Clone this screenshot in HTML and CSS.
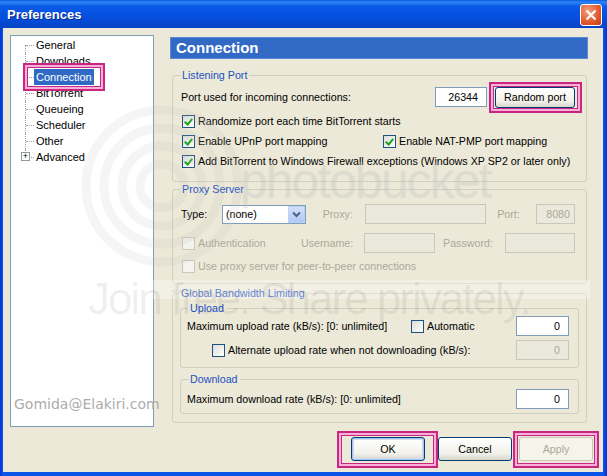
FILE: index.html
```html
<!DOCTYPE html>
<html lang="en">

<head>
  <meta charset="UTF-8">
  <meta name="viewport" content="width=device-width, initial-scale=1.0">
  <title>Preferences</title>
  <link rel="stylesheet" href="styles.css">
</head>

<body>
  <div class="window">
    <div class="titlebar">
      <span class="title">Preferences</span>
      <span class="close">
        <svg width="12" height="12" viewBox="0 0 12 12"><path d="M1.5 1.5 L10.5 10.5 M10.5 1.5 L1.5 10.5" stroke="#fff" stroke-width="2.2" /></svg>
      </span>
    </div>

    <div class="client">
      <div class="content">
        <!-- category tree -->
        <div class="tree">
          <div class="tree-item"><span class="branch"></span><span class="label">General</span></div>
          <div class="tree-item"><span class="branch"></span><span class="label">Downloads</span></div>
          <div class="tree-item"><span class="branch"></span><span class="label selected">Connection</span></div>
          <div class="tree-item"><span class="branch"></span><span class="label">BitTorrent</span></div>
          <div class="tree-item"><span class="branch"></span><span class="label">Queueing</span></div>
          <div class="tree-item"><span class="branch"></span><span class="label">Scheduler</span></div>
          <div class="tree-item"><span class="branch"></span><span class="label">Other</span></div>
          <div class="tree-item last"><span class="branch"><span class="expander">+</span></span><span class="label">Advanced</span></div>
        </div>

        <div class="panel">
          <div class="panel-head">Connection</div>

          <fieldset class="group listen">
            <legend>Listening Port</legend>
            <div class="row port-row">
              <span>Port used for incoming connections:</span>
              <span class="field port-field">26344</span>
              <span class="button">Random port</span>
            </div>
            <div class="row"><span class="check on"></span><span>Randomize port each time BitTorrent starts</span></div>
            <div class="row">
              <span class="check on"></span><span class="upnp">Enable UPnP port mapping</span>
              <span class="check on"></span><span>Enable NAT-PMP port mapping</span>
            </div>
            <div class="row"><span class="check on"></span><span>Add BitTorrent to Windows Firewall exceptions (Windows XP SP2 or later only)</span></div>
          </fieldset>

          <fieldset class="group proxy">
            <legend>Proxy Server</legend>
            <div class="row type-row">
              <span class="w-type">Type:</span>
              <span class="select">(none)<span class="drop"><svg width="9" height="7" viewBox="0 0 9 7"><path d="M1 1.5 L4.5 5 L8 1.5" stroke="#4D6185" stroke-width="2" fill="none" /></svg></span></span>
              <span class="dim w-proxy">Proxy:</span>
              <span class="field off w-proxyfield"></span>
              <span class="dim w-port">Port:</span>
              <span class="field off w-portfield">8080</span>
            </div>
            <div class="row auth-row">
              <span class="check off"></span><span class="dim w-auth">Authentication</span>
              <span class="dim w-user">Username:</span>
              <span class="field off w-userfield"></span>
              <span class="dim w-pass">Password:</span>
              <span class="field off w-passfield"></span>
            </div>
            <div class="row"><span class="check off"></span><span class="dim">Use proxy server for peer-to-peer connections</span></div>
          </fieldset>

          <fieldset class="group bandwidth">
            <legend>Global Bandwidth Limiting</legend>
            <fieldset class="sub upload">
              <legend>Upload</legend>
              <div class="row max-row">
                <span class="w-max">Maximum upload rate (kB/s): [0: unlimited]</span>
                <span class="check"></span><span>Automatic</span>
                <span class="field num">0</span>
              </div>
              <div class="row alt-row">
                <span class="check"></span><span>Alternate upload rate when not downloading (kB/s):</span>
                <span class="field num off">0</span>
              </div>
            </fieldset>
            <fieldset class="sub download">
              <legend>Download</legend>
              <div class="row">
                <span>Maximum download rate (kB/s): [0: unlimited]</span>
                <span class="field num">0</span>
              </div>
            </fieldset>
          </fieldset>
        </div>
      </div>

      <div class="buttons">
        <span class="button default">OK</span>
        <span class="button">Cancel</span>
        <span class="button disabled">Apply</span>
      </div>
    </div>

    <!-- photobucket watermark, lies over everything -->
    <div class="mark-band"></div>
    <svg class="mark-rings" width="200" height="200" viewBox="0 0 200 200">
      <circle cx="100" cy="100" r="22" />
      <circle cx="100" cy="100" r="40" />
      <circle cx="100" cy="100" r="58" />
      <circle cx="100" cy="100" r="76" />
    </svg>
    <div class="mark-logo">photobucket</div>
    <div class="mark-join">Join free. Share privately.</div>
    <div class="mark-user">Gomida@Elakiri.com</div>

    <!-- pink highlight boxes -->
    <div class="hl hl-conn"></div>
    <div class="hl hl-random"></div>
    <div class="hl hl-ok"></div>
    <div class="hl hl-apply"></div>
  </div>
</body>

</html>
```

FILE: styles.css
```css
* {
  margin: 0;
  padding: 0;
  box-sizing: border-box;
}

body {
  background-color: #0a3fc0;
  font-family: "Liberation Sans", Arial, sans-serif;
  font-size: 10.7px;
  color: #000000;
}

.window {
  position: relative;
  width: 607px;
  height: 476px;
  overflow: hidden;
  background: linear-gradient(to right, #0831d9, #0a55e8 3px, #0a55e8 calc(100% - 4px), #0831d9);
  padding: 0 4px 4px 3px;
  display: flex;
  flex-direction: column;
}

.titlebar {
  height: 28px;
  margin: 0 -4px 0 -3px;
  padding: 0 5px 0 7px;
  display: flex;
  align-items: center;
  justify-content: space-between;
  background: linear-gradient(to bottom, #0a5fe0 0%, #2f86f6 8%, #0a5ae6 22%, #0650df 60%, #0642c4 100%);
}

.title {
  color: #ffffff;
  font-weight: bold;
  font-size: 13px;
  text-shadow: 1px 1px 0 #0a2a8a;
}

.close {
  width: 22px;
  height: 22px;
  margin-top: 2px;
  border: 1px solid #ffffff;
  border-radius: 3px;
  background: radial-gradient(circle at 35% 30%, #f3a07c, #e2572c 60%, #c23d14);
  display: flex;
  align-items: center;
  justify-content: center;
}

.client {
  flex: 1;
  background-color: #ece9d8;
  padding: 7px 0 0 7px;
  display: flex;
  flex-direction: column;
}

.content {
  display: flex;
  height: 392px;
}

/* tree */
.tree {
  width: 144px;
  height: 392px;
  background: #ffffff;
  border: 1px solid #7f9db9;
  padding-top: 1px;
  padding-left: 14px;
  font-size: 11px;
}

.tree-item {
  height: 16px;
  display: flex;
  align-items: center;
  position: relative;
}

.branch {
  width: 9px;
  height: 16px;
  position: relative;
  border-left: 1px dotted #a0a0a0;
}

.branch::after {
  content: "";
  position: absolute;
  left: 0;
  top: 8px;
  width: 8px;
  border-top: 1px dotted #a0a0a0;
}

.tree-item:first-child .branch {
  height: 8px;
  margin-top: 8px;
}

.tree-item:first-child .branch::after {
  top: 0;
}

.tree-item.last .branch {
  height: 8px;
  margin-bottom: 8px;
}

.expander {
  position: absolute;
  left: -5px;
  top: 3px;
  width: 9px;
  height: 9px;
  border: 1px solid #919b9c;
  background: #ffffff;
  font-size: 9px;
  line-height: 7px;
  text-align: center;
  color: #000000;
  z-index: 1;
}

.label {
  padding: 1px 2px;
  line-height: 14px;
}

.label.selected {
  background: #316ac5;
  color: #ffffff;
}

/* right panel */
.panel {
  width: 418px;
  margin-left: 16px;
}

.panel-head {
  margin-top: 2px;
  height: 22px;
  background: #3169c4;
  border: 1px solid #5a8ad6;
  color: #ffffff;
  font-weight: bold;
  font-size: 15px;
  line-height: 20px;
  padding-left: 5px;
}

.group,
.sub {
  border: 1px solid #d0d0bf;
  border-radius: 3px;
  min-width: 0;
}

.group {
  margin: 0 1px 0 2px;
  padding: 0 11px 0 8px;
}

legend {
  color: #2150c2;
  padding: 0 2px;
  margin-left: -1px;
  line-height: 13px;
}

.row {
  display: flex;
  align-items: center;
  height: 20px;
  white-space: nowrap;
}

.check {
  width: 13px;
  height: 13px;
  border: 1px solid #1c5180;
  background: linear-gradient(135deg, #dcdcd7, #ffffff);
  margin: 0 3px 0 1px;
  flex: none;
  position: relative;
}

.check.on::after {
  content: "";
  position: absolute;
  left: 3px;
  top: 1px;
  width: 3px;
  height: 6px;
  border: solid #21a121;
  border-width: 0 2px 2px 0;
  transform: rotate(40deg);
}

.check.off {
  border-color: #cac8bb;
  background: #f4f3ee;
}

.dim {
  color: #aca899;
}

.field {
  height: 20px;
  border: 1px solid #7f9db9;
  background: #ffffff;
  text-align: right;
  padding-right: 8px;
  line-height: 18px;
}

.field.off {
  border-color: #c9c7ba;
  background: #ebe9dc;
  color: #aca899;
}

.button {
  height: 21px;
  border: 1px solid #003c74;
  border-radius: 3px;
  background: linear-gradient(to bottom, #ffffff, #f2f1ea 70%, #d8d6ca);
  display: flex;
  align-items: center;
  justify-content: center;
}

/* listening port */
.listen {
  margin-top: 10px;
  padding-bottom: 10px;
}

.port-row {
  margin-top: 5px;
  margin-bottom: 4px;
}

.port-field {
  width: 52px;
  margin-left: auto;
}

.port-row .button {
  width: 80px;
  margin-left: 8px;
}

.upnp {
  width: 184px;
}

/* proxy */
.proxy {
  margin-top: 1px;
  padding-bottom: 7px;
}

.type-row {
  margin-top: 8px;
  margin-bottom: 9px;
}

.w-type { width: 41px; }
.w-proxy { width: 42px; margin-left: 17px; }
.w-proxyfield { width: 122px; }
.w-port { width: 39px; margin-left: 11px; }
.w-portfield { width: 39px; padding-right: 4px; }
.w-auth { width: 103px; }
.w-user { width: 63px; }
.w-userfield { width: 71px; }
.w-pass { width: 62px; margin-left: 8px; }
.w-passfield { width: 70px; }

.select {
  width: 84px;
  height: 19px;
  border: 1px solid #7f9db9;
  background: #ffffff;
  display: flex;
  align-items: center;
  padding-left: 3px;
  justify-content: space-between;
}

.drop {
  width: 17px;
  height: 17px;
  background: linear-gradient(to bottom, #d4e0fb, #b1c7f4);
  border: 1px solid #bcd0f8;
  display: flex;
  align-items: center;
  justify-content: center;
}

.auth-row {
  margin-bottom: 3px;
}

/* bandwidth */
.bandwidth {
  margin-top: 3px;
  padding: 0 7px 8px 7px;
}

.sub {
  padding: 0 9px 0 6px;
}

.sub legend {
  margin-left: 1px;
}

.upload {
  margin-top: 2px;
  padding-bottom: 7px;
}

.max-row {
  margin-top: 1px;
  margin-bottom: 4px;
}

.w-max {
  width: 223px;
}

.num {
  width: 53px;
  margin-left: auto;
}

.alt-row {
  padding-left: 24px;
}

.download {
  margin-top: 5px;
  padding-bottom: 4px;
}

.download .row {
  margin-top: 3px;
}

/* bottom buttons */
.buttons {
  display: flex;
  justify-content: flex-end;
  padding: 10px 10px 0 0;
}

.buttons .button {
  width: 74px;
  height: 24px;
  margin-left: 7px;
}

.buttons .default {
  margin-right: 6px;
  box-shadow: inset 0 0 0 1px #a8c4ee, inset 0 0 0 2px #cddcf6;
}

.buttons .disabled {
  border-color: #c9c7ba;
  background: #f5f4ea;
  color: #aca899;
}

/* watermark */
.mark-band {
  position: absolute;
  left: 90px;
  top: 280px;
  width: 500px;
  height: 19px;
  background: rgba(255, 255, 255, 0.3);
  pointer-events: none;
}

.mark-rings {
  position: absolute;
  left: 62px;
  top: 86px;
  pointer-events: none;
}

.mark-rings circle {
  fill: none;
  stroke: rgba(190, 190, 190, 0.16);
  stroke-width: 9;
}

.mark-logo {
  position: absolute;
  left: 240px;
  top: 152px;
  font-size: 50px;
  letter-spacing: -2px;
  white-space: nowrap;
  color: rgba(255, 255, 255, 0.2);
  text-shadow: 0 0 1px rgba(120, 120, 120, 0.2);
  pointer-events: none;
}

.mark-join {
  position: absolute;
  left: 88px;
  top: 274px;
  font-size: 44px;
  letter-spacing: -2px;
  white-space: nowrap;
  color: rgba(0, 0, 0, 0.07);
  pointer-events: none;
}

.mark-user {
  position: absolute;
  left: 14px;
  top: 396px;
  font-family: "DejaVu Sans", Verdana, sans-serif;
  font-size: 14px;
  color: #acacac;
  pointer-events: none;
}

/* highlight frames */
.hl {
  position: absolute;
  border: 2px solid #c8267f;
  box-shadow: inset 0 0 0 2px #f6b0da, inset 0 0 0 3px #c8267f;
  pointer-events: none;
}

.hl-conn { left: 23px; top: 63px; width: 82px; height: 28px; }
.hl-random { left: 489px; top: 82px; width: 93px; height: 31px; }
.hl-ok { left: 337px; top: 431px; width: 101px; height: 37px; }
.hl-apply { left: 513px; top: 431px; width: 86px; height: 37px; }
```
